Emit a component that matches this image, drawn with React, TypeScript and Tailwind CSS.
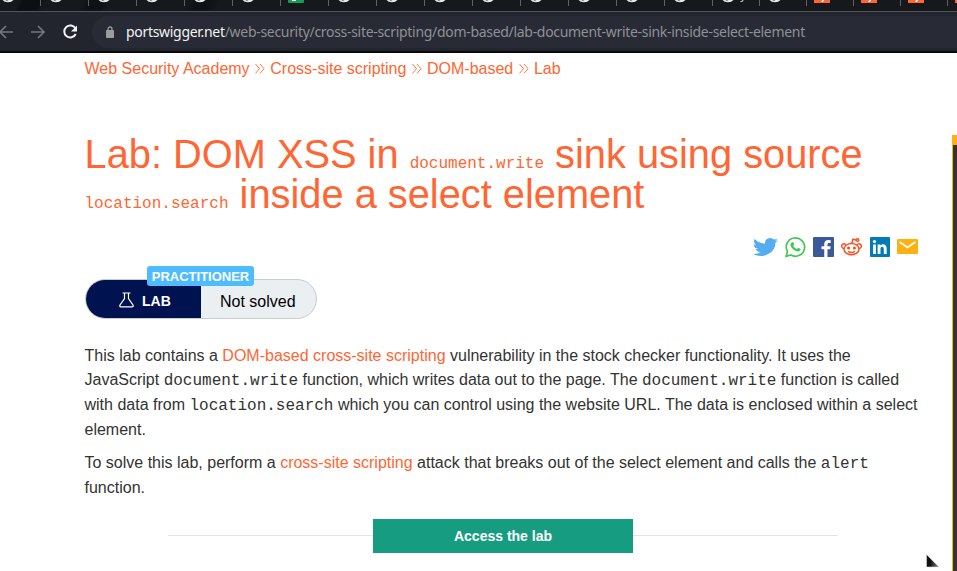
import React from "react";

const tabs: { w: number; kind: string }[] = [
  { w: 41, kind: "globe" },
  ...Array.from({ length: 5 }, () => ({ w: 48, kind: "globe" })),
  { w: 48, kind: "sheet" },
  ...Array.from({ length: 8 }, () => ({ w: 48, kind: "globe" })),
  { w: 47, kind: "typed" },
  { w: 47, kind: "globe" },
  { w: 47, kind: "burp" },
  { w: 47, kind: "burp" },
  { w: 47, kind: "burp" },
  { w: 47, kind: "burp" },
];

function TabIcon({ kind }: { kind: string }) {
  if (kind === "sheet")
    return (
      <svg width="16" height="6" viewBox="0 0 16 6" className="block">
        <path d="M0 0h16v2a1 1 0 0 1-1 1H1a1 1 0 0 1-1-1z" fill="#169c58" />
        <path d="M4 0h4v1H4z" fill="#fff" />
      </svg>
    );
  if (kind === "burp")
    return (
      <svg width="16" height="6" viewBox="0 0 16 6" className="block">
        <path d="M0 0h16v3H0z" fill="#ff6633" />
        <path d="M8 0h2L9 2H7.500z" fill="#fff" />
      </svg>
    );
  return (
    <svg width="16" height="6" viewBox="0 0 16 6" className="block">
      <path d="M2.500 0h11Q11.500 2.300 8 2.300T2.500 0Z" fill="#e8eaed" />
      <path d="M5.500 0h3L7.500 .5H6z" fill="#202124" />
    </svg>
  );
}

function Crumb() {
  return (
    <svg width="12" height="12" viewBox="0 0 12 12" className="mx-[4.350px] shrink-0" fill="none" stroke="#ff6633" strokeWidth="0.9">
      <path d="M1.500 1 5.500 5.700 1.500 10.400M6 1 10 5.700 6 10.400" />
    </svg>
  );
}

function Code({ children }: { children: React.ReactNode }) {
  return <code className="font-['Liberation_Mono',monospace] text-[16px] leading-none">{children}</code>;
}

export default function App() {
  return (
    <div className="relative h-[571px] w-[957px] overflow-hidden bg-white font-['Liberation_Sans',Arial,sans-serif] text-[16px] text-[#333332]">
      <header className="h-[53px] border-b-2 border-[#08090c] bg-[#22242e]">
        <div className="flex h-[12px] overflow-hidden border-b border-[#53545a] bg-[linear-gradient(115deg,#17181c_0_17px,#0e0f13_22px_36px,#17181c_42px_76px,#101115_82px_95px,#17181c_100px_170px,#101115_180px_190px,#17181c_200px)]">
          {tabs.map((t, i) => (
            <div key={i} className="flex h-[6px] shrink-0 border-r border-[#606166]" style={{ width: t.w }}>
              <div className={i === 0 ? "w-4 shrink-0" : "ml-[7px] w-4 shrink-0"}>
                <TabIcon kind={t.kind} />
              </div>
              {t.kind === "typed" && <span className="-mt-[14px] ml-[4px] text-[13px] leading-[18px] text-[#b8babe]">y</span>}
            </div>
          ))}
        </div>
        <div className="flex h-[39px] items-center">
          <svg width="92" height="39" viewBox="0 0 92 39" fill="none" className="shrink-0">
            <path d="M0 20h13M6 14l-6 6 6 6" stroke="#74767c" strokeWidth="1.700" />
            <path d="M31 20h13M38 14l6 6-6 6" stroke="#74767c" strokeWidth="1.700" />
            <path d="M75.500 16.500A6 6 0 1 0 75.700 22" stroke="#f5f5f6" strokeWidth="2" />
            <path d="M77 13.500v6h-6z" fill="#f5f5f6" />
          </svg>
          <div className="mt-px flex h-[32px] grow items-center rounded-l-full bg-[#282a35] pl-[14px]">
            <svg width="8" height="12" viewBox="0 0 8 12" className="mr-[12px] -mt-px shrink-0">
              <path d="M2 5V3a2 2 0 0 1 4 0v2" fill="none" stroke="#9a9ca2" strokeWidth="1.300" />
              <rect y="4" width="8" height="8" rx="1" fill="#9a9ca2" />
            </svg>
            <span className="-mt-px whitespace-nowrap font-['Noto_Sans',sans-serif] text-[14px] tracking-[-0.305px] text-[#8f9196]">
              <span className="text-[#f3f3f4]">portswigger.net</span>/web-security/cross-site-scripting/dom-based/lab-document-write-sink-inside-select-element
            </span>
          </div>
        </div>
      </header>

      <main className="flex">
        <div className="w-[868px] shrink-0 pl-[84.500px]">
          <nav className="flex h-[32px] items-center whitespace-nowrap text-[#ff6633]">
            <span>Web Security Academy</span>
            <Crumb />
            <span>Cross-site scripting</span>
            <Crumb />
            <span>DOM-based</span>
            <Crumb />
            <span>Lab</span>
          </nav>

          <h1 className="mt-[49px] whitespace-nowrap text-[39.800px] leading-[40px] text-[#ff6633]">
            Lab: DOM XSS in <Code>document.write</Code> sink using source
            <br />
            <Code>location.search</Code> inside a select element
          </h1>

          <div className="ml-[668.500px] mt-[22px] flex h-[22px] w-[168px] items-center">
            <svg width="25" height="22" viewBox="0 0 24 24" preserveAspectRatio="none" className="mr-[7px] shrink-0" fill="#55acee">
              <path d="M23.953 4.570a10 10 0 01-2.825.775 4.958 4.958 0 002.163-2.723c-.951.555-2.005.959-3.127 1.184a4.920 4.920 0 00-8.384 4.482C7.690 8.095 4.067 6.130 1.640 3.162a4.822 4.822 0 00-.666 2.475c0 1.710.870 3.213 2.188 4.096a4.904 4.904 0 01-2.228-.616v.060a4.923 4.923 0 003.946 4.827 4.996 4.996 0 01-2.212.085 4.936 4.936 0 004.604 3.417 9.867 9.867 0 01-6.102 2.105c-.390 0-.779-.023-1.170-.067a13.995 13.995 0 007.557 2.209c9.053 0 13.998-7.496 13.998-13.985 0-.210 0-.420-.015-.630A9.935 9.935 0 0024 4.590z" />
            </svg>
            <svg width="21" height="22" viewBox="0 0 22 22" className="mr-[7px] shrink-0" fill="none">
              <path d="M1.200 20.800l1.400-5A9.600 9.600 0 1 1 6.200 19.400z" stroke="#43c653" strokeWidth="1.800" />
              <path d="M7.400 6.100c.5-.4 1-.3 1.300.3l.8 1.700c.2.500-.6 1.200-.9 1.600 1 1.800 2.200 2.800 4 3.500l1.200-1.300 2.400 1.200c.5 1.900-1.900 3-3.500 2.500-3.400-.9-6-3.300-6.900-6.100-.4-1.300.6-2.700 1.600-3.400z" fill="#43c653" />
            </svg>
            <svg width="21" height="20" viewBox="0 0 20 20" preserveAspectRatio="none" className="mr-[7px] shrink-0">
              <rect width="20" height="20" rx="1" fill="#3b5998" />
              <path d="M13.800 20v-7.700h2.600l.4-3h-3V7.400c0-.9.300-1.500 1.500-1.500h1.600V3.200l-2.300-.1c-2.300 0-3.900 1.400-3.900 4v2.200H8.100v3h2.600V20z" fill="#fff" />
            </svg>
            <svg width="21" height="20" viewBox="0 0 21 20" className="mr-[8px] shrink-0" fill="none" stroke="#ff4f20" strokeWidth="1.500">
              <ellipse cx="10.500" cy="12.200" rx="7.500" ry="5.600" />
              <path d="M5 8.200A2.300 2.300 0 1 0 2.900 11.500M16 8.200a2.300 2.300 0 1 1 2.100 3.300M10.700 6.500l1.300-4.300 3.200.8" />
              <circle cx="16.500" cy="3" r="1.300" />
              <circle cx="7.600" cy="11" r=".8" fill="#ff4f20" />
              <circle cx="13.400" cy="11" r=".8" fill="#ff4f20" />
              <path d="M7 14.300q3.500 2.200 7 0" />
            </svg>
            <svg width="20" height="20" viewBox="0 0 21 20" preserveAspectRatio="none" className="mr-[7px] shrink-0">
              <rect width="21" height="20" rx="1" fill="#007bb5" />
              <path d="M3.200 7.500h3V17h-3zM8 7.500h2.900v1.300c1.500-2.500 6.600-2.100 6.600 2.600V17h-3v-5c0-3-3.500-2.800-3.500 0v5H8z" fill="#fff" />
              <circle cx="4.700" cy="4.600" r="1.700" fill="#fff" />
            </svg>
            <svg width="21" height="15" viewBox="0 0 20 15" preserveAspectRatio="none" className="-mt-px shrink-0">
              <rect width="20" height="15" rx="1" fill="#ffb112" />
              <path d="M2.500 3l7.500 5.500L17.500 3" fill="none" stroke="#fff" strokeWidth="1.700" />
            </svg>
          </div>

          <div className="relative ml-[0.500px] mt-[21px] flex h-[40px] w-[232px] overflow-visible rounded-full border border-[#c8cccf] bg-[#eaeff2]">
            <div className="flex w-[115px] items-center rounded-l-full bg-[#00124f] pl-[33px] pt-[4px] text-[14px] font-bold text-white">
              <svg width="15" height="16" viewBox="0 0 15 16" fill="none" stroke="#fff" strokeWidth="1.200" className="-mt-[3px] mr-[8px] shrink-0">
                <path d="M3.500 1h8M5.500 1v5.500L1 13q-.7 1.800 1 1.800h11q1.700 0 1-1.800L9.500 6.500V1" />
              </svg>
              <span className="mt-px">LAB</span>
            </div>
            <div className="grow pl-[19px] pt-[2px] leading-[39px] text-black">Not solved</div>
            <div className="absolute -top-[14px] left-[61px] h-[20px] w-[107px] rounded-[3px] bg-[#4dbdff] text-center text-[13px] font-bold leading-[22px] text-white">PRACTITIONER</div>
          </div>

          <p className="mt-[24.700px] whitespace-nowrap leading-[24.700px]">
            This lab contains a <span className="text-[#ff6633]">DOM-based cross-site scripting</span> vulnerability in the stock checker functionality. It uses the
            <br />
            JavaScript <Code>document.write</Code> function, which writes data out to the page. The <Code>document.write</Code> function is called
            <br />
            with data from <Code>location.search</Code> which you can control using the website URL. The data is enclosed within a select
            <br />
            element.
          </p>
          <p className="mt-[8.300px] whitespace-nowrap leading-[24.700px]">
            To solve this lab, perform a <span className="text-[#ff6633]">cross-site scripting</span> attack that breaks out of the select element and calls the <Code>alert</Code>
            <br />
            function.
          </p>

          <div className="ml-[83.500px] mt-[19px] flex w-[670px] items-start">
            <div className="mt-[16px] h-px grow bg-[#e4e4e4]" />
            <div className="h-[34px] w-[260px] bg-[#169c80] text-center text-[14px] font-bold leading-[34px] text-white">Access the lab</div>
            <div className="mt-[16px] h-px grow bg-[#e4e4e4]" />
          </div>
        </div>
        <aside className="ml-auto mt-[82px] h-[436px] w-[5px] shrink-0 border-l border-t-[10px] border-[#ffb012] bg-[#333332]" />
      </main>
      <svg width="14" height="14" viewBox="0 0 14 14" className="absolute left-[926px] top-[554px]">
        <defs>
          <linearGradient id="cursor" x1="0" x2="1"><stop offset=".3" stopColor="#111" /><stop offset="1" stopColor="#888" /></linearGradient>
        </defs>
        <path d="M.5.5v12.500h12.500z" fill="url(#cursor)" stroke="#ddd" strokeWidth=".6" />
      </svg>
    </div>
  );
}
